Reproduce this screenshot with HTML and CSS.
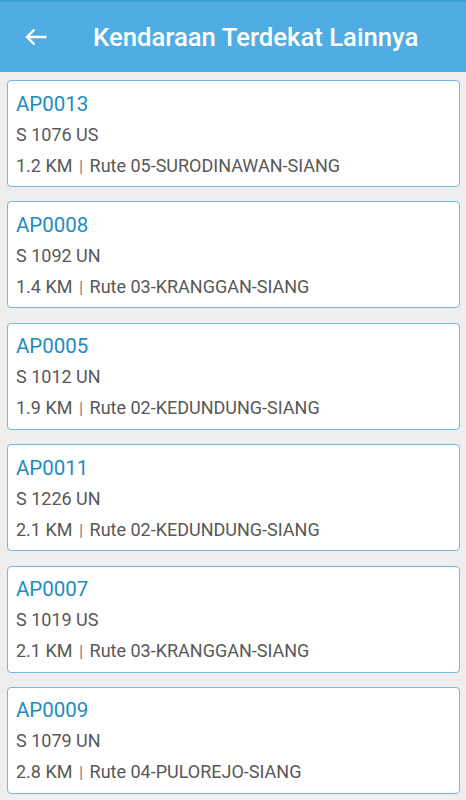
FILE: index.html
```html
<!DOCTYPE html>
<html lang="id">
<head>
    <meta charset="UTF-8">
    <meta name="viewport" content="width=device-width, initial-scale=1.0">
    <title>Kendaraan Terdekat Lainnya</title>
    <link rel="stylesheet" href="styles.css">
</head>
<body>
    <div class="toolbar">
        <svg class="back" width="24" height="20" viewBox="0 0 24 20">
            <path d="M22.5 10H3M10.5 2.5L3 10l7.5 7.5" fill="none" stroke="#fff" stroke-width="2.4"/>
        </svg>
        <h1>Kendaraan Terdekat Lainnya</h1>
    </div>

    <div class="list">
        <div class="card">
            <p class="code">AP0013</p>
            <p class="plate">S 1076 US</p>
            <p class="info">1.2 KM <span class="sep">|</span> Rute 05-SURODINAWAN-SIANG</p>
        </div>
        <div class="card">
            <p class="code">AP0008</p>
            <p class="plate">S 1092 UN</p>
            <p class="info">1.4 KM <span class="sep">|</span> Rute 03-KRANGGAN-SIANG</p>
        </div>
        <div class="card">
            <p class="code">AP0005</p>
            <p class="plate">S 1012 UN</p>
            <p class="info">1.9 KM <span class="sep">|</span> Rute 02-KEDUNDUNG-SIANG</p>
        </div>
        <div class="card">
            <p class="code">AP0011</p>
            <p class="plate">S 1226 UN</p>
            <p class="info">2.1 KM <span class="sep">|</span> Rute 02-KEDUNDUNG-SIANG</p>
        </div>
        <div class="card">
            <p class="code">AP0007</p>
            <p class="plate">S 1019 US</p>
            <p class="info">2.1 KM <span class="sep">|</span> Rute 03-KRANGGAN-SIANG</p>
        </div>
        <div class="card">
            <p class="code">AP0009</p>
            <p class="plate">S 1079 UN</p>
            <p class="info">2.8 KM <span class="sep">|</span> Rute 04-PULOREJO-SIANG</p>
        </div>
    </div>
</body>
</html>
```

FILE: styles.css
```css
body {
    font-family: Roboto, 'Noto Sans', sans-serif;
    margin: 0;
    padding: 0;
    background-color: #eeeeee;
    overflow: hidden;
}
.toolbar {
    height: 72px;
    background-color: #4fade3;
    border-top: 2px solid #3a9fd9;
    box-sizing: border-box;
    display: flex;
    align-items: center;
    padding-left: 24px;
}
.back {
    flex-shrink: 0;
}
.toolbar h1 {
    margin: 0 0 0 45px;
    font-size: 25.7px;
    font-weight: 500;
    color: white;
}
.list {
    padding: 8px 6px 0 7px;
    display: flex;
    flex-direction: column;
    gap: 14.4px;
}
.card {
    background-color: white;
    border: 1.5px solid #72b9da;
    border-radius: 4px;
    height: 107px;
    box-sizing: border-box;
    padding: 9.5px 8px 0 8px;
}
.card p {
    margin: 0;
    color: #585858;
    font-size: 18px;
    line-height: 30px;
}
.card .code {
    font-size: 20.5px;
    color: #1d8cc0;
    line-height: 26px;
    margin-bottom: 3px;
}
.card .info {
    margin-top: 1px;
}
.sep {
    color: #808080;
    font-size: 17px;
    margin: 0 2px;
}
```
